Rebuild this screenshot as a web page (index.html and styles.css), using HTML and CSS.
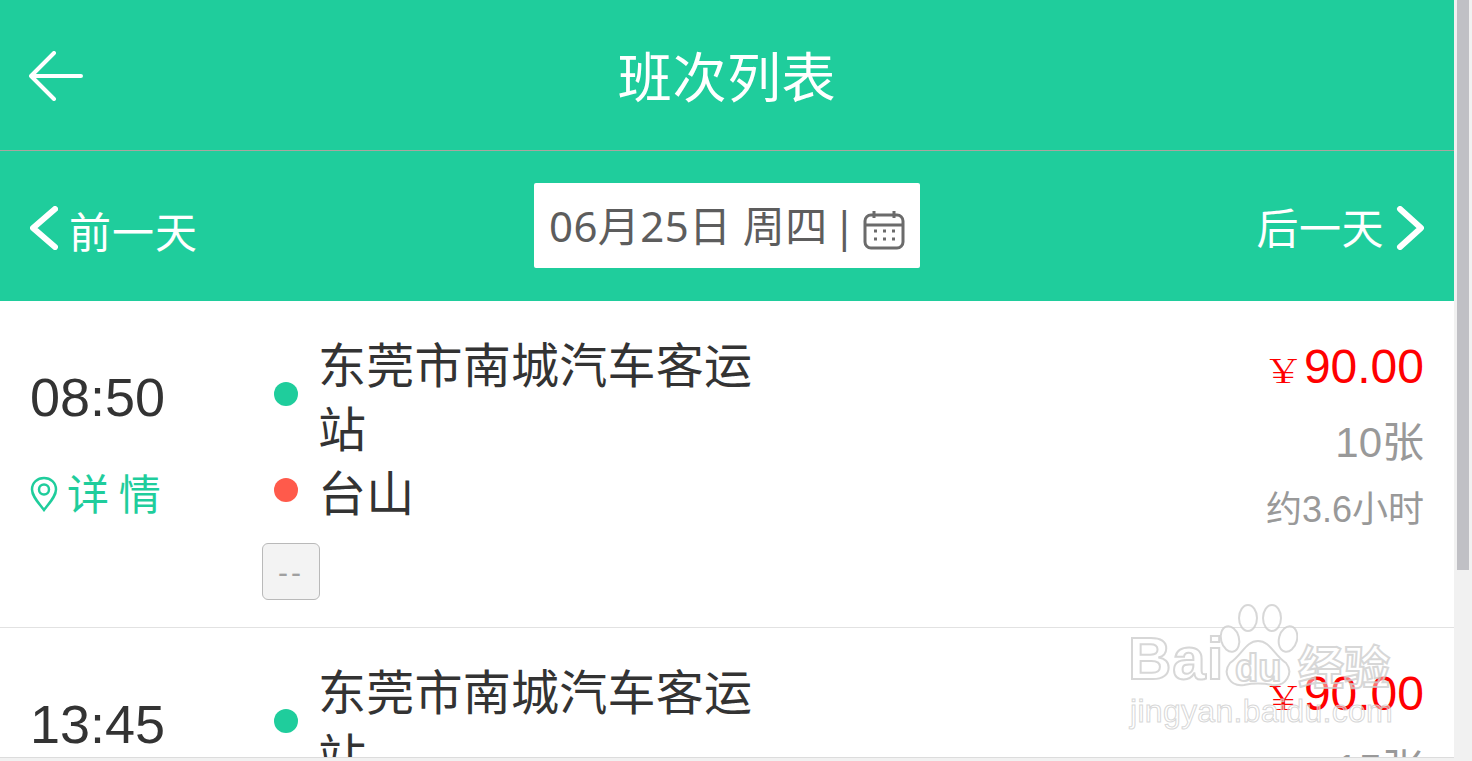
FILE: index.html
```html
<!DOCTYPE html>
<html lang="zh-CN">
  <head>
    <meta charset="UTF-8" />
    <title>班次列表</title>
    <link rel="stylesheet" href="styles.css">
  </head>
  <body>
    <div class="window">
      <div class="page">
        <header class="title-bar">
          <svg class="back-icon" viewBox="0 0 54 50" width="54" height="50">
            <path d="M25 2 L2 25 L25 48 M2 25 H52" />
          </svg>
          <h1>班次列表</h1>
        </header>

        <nav class="date-bar">
          <a class="day-link day-prev">
            <svg class="chevron" viewBox="0 0 28 44" width="28" height="44"><path d="M25 3 L3 22 L25 41" /></svg>
            <span>前一天</span>
          </a>
          <div class="date-box">
            <span class="date-text">06月25日 周四</span>
            <span class="date-sep">|</span>
            <svg class="calendar" viewBox="0 0 42 40" width="42" height="40">
              <rect x="2" y="5" width="38" height="33" rx="6" />
              <path d="M2 15 H40 M11 1 V8 M31 1 V8" />
              <path class="dots" d="M11 21 H14 M20 21 H23 M29 21 H32 M11 29 H14 M20 29 H23 M29 29 H32" />
            </svg>
          </div>
          <a class="day-link day-next">
            <span>后一天</span>
            <svg class="chevron" viewBox="0 0 28 44" width="28" height="44"><path d="M4 3 L25 22 L4 41" /></svg>
          </a>
        </nav>

        <section class="trip">
          <div class="trip-time">
            <div class="time">08:50</div>
            <a class="detail">
              <svg class="pin" viewBox="0 0 28 36" width="28" height="36">
                <path d="M14 34 C8 26 2 20 2 13.500 C2 6.500 7.500 2 14 2 C20.500 2 26 6.500 26 13.500 C26 20 20 26 14 34 Z" />
                <circle cx="14" cy="13.500" r="5" />
              </svg>
              <span>详 情</span>
            </a>
          </div>
          <div class="trip-route">
            <div class="stop"><i class="dot dot-from"></i><span>东莞市南城汽车客运站</span></div>
            <div class="stop"><i class="dot dot-to"></i><span>台山</span></div>
            <div class="tag">--</div>
          </div>
          <div class="trip-info">
            <div class="price"><small>￥</small>90.00</div>
            <div class="seats">10张</div>
            <div class="duration">约3.6小时</div>
          </div>
        </section>

        <section class="trip">
          <div class="trip-time">
            <div class="time">13:45</div>
          </div>
          <div class="trip-route">
            <div class="stop"><i class="dot dot-from"></i><span>东莞市南城汽车客运站</span></div>
          </div>
          <div class="trip-info">
            <div class="price"><small>￥</small>90.00</div>
            <div class="seats">15张</div>
          </div>
        </section>
      </div>

      <div class="scrollbar"><div class="thumb"></div></div>
      <div class="h-scrollbar"></div>

      <div class="watermark">
        <div class="wm-logo">
          <span>Bai</span>
          <svg class="paw" viewBox="0 0 80 86" width="80" height="86">
            <ellipse cx="12" cy="36" rx="9" ry="13" transform="rotate(-15 12 36)" />
            <ellipse cx="30" cy="15" rx="9" ry="13" />
            <ellipse cx="54" cy="15" rx="9" ry="13" />
            <ellipse cx="70" cy="36" rx="9" ry="13" transform="rotate(15 70 36)" />
            <path d="M40 38 C52 38 56 52 68 60 C76 70 68 84 54 82 C44 80 36 80 26 82 C12 84 4 70 12 60 C24 52 28 38 40 38 Z" />
          </svg>
          <span class="wm-du">du</span>
          <span class="wm-cn">经验</span>
        </div>
        <div class="wm-url">jingyan.baidu.com</div>
      </div>
    </div>
  </body>
</html>
```

FILE: styles.css
```css
:root {
  --green: #1fcd9c;
  --text-dark: #333333;
  --text-gray: #999999;
  --cjk: "Noto Sans CJK SC", sans-serif;
  --latin: "Liberation Sans", "Noto Sans CJK SC", sans-serif;
}

* {
  margin: 0;
  padding: 0;
  box-sizing: border-box;
}

html,
body {
  height: 100%;
  overflow: hidden;
}

body {
  background-color: white;
  color: var(--text-dark);
  font-family: var(--cjk);
}

.window {
  position: relative;
  display: flex;
  height: 761px;
  overflow: hidden;
}

.page {
  width: 1454px;
  flex-shrink: 0;
}

.title-bar {
  position: relative;
  height: 151px;
  background-color: var(--green);
  border-bottom: 1px solid #a9a5a0;
  display: flex;
  align-items: center;
  justify-content: center;
}

.title-bar h1 {
  font-size: 54px;
  font-weight: 400;
  color: white;
  line-height: 1;
  letter-spacing: 0.600px;
}

.back-icon {
  position: absolute;
  left: 29px;
  top: 51px;
}

.back-icon path {
  fill: none;
  stroke: white;
  stroke-width: 4;
  stroke-linecap: round;
  stroke-linejoin: round;
}

.date-bar {
  height: 150px;
  background-color: var(--green);
  padding: 32px 30px 0 30px;
  display: flex;
  justify-content: space-between;
  align-items: flex-start;
}

.day-link {
  display: flex;
  align-items: flex-start;
  color: white;
  font-size: 42px;
  line-height: 1;
  width: 240px;
}

.day-next {
  justify-content: flex-end;
}

.day-prev span {
  margin-top: 26px;
  margin-left: 11px;
  letter-spacing: 1px;
}

.day-next span {
  margin-top: 22px;
  margin-right: 12px;
  letter-spacing: 0.500px;
}

.chevron {
  margin-top: 23px;
}

.chevron path {
  fill: none;
  stroke: white;
  stroke-width: 6;
  stroke-linecap: round;
  stroke-linejoin: round;
}

.date-box {
  width: 386px;
  height: 85px;
  background-color: white;
  border-radius: 2px;
  color: #5d5d5d;
  font-family: "Noto Sans", "Noto Sans CJK SC", sans-serif;
  font-size: 42px;
  line-height: 1;
  padding: 0 15px 0 15px;
  display: flex;
  align-items: center;
  white-space: nowrap;
}

.date-text {
  letter-spacing: 0.400px;
}

.date-sep {
  margin-left: 5px;
}

.calendar {
  margin-left: auto;
  margin-top: 9px;
}

.calendar rect,
.calendar path {
  fill: none;
  stroke: #6b6b6b;
  stroke-width: 3;
}

.trip {
  display: flex;
  height: 327px;
  border-bottom: 1px solid #e2e2e2;
  padding: 29px 30px 0 30px;
}

.trip-time {
  width: 232px;
  flex-shrink: 0;
}

.time {
  font-family: var(--latin);
  font-size: 54px;
  line-height: 62px;
  margin-top: 36px;
}

.detail {
  display: flex;
  align-items: center;
  margin-top: 42px;
  color: var(--green);
  font-size: 42px;
  line-height: 52px;
  font-family: var(--latin);
}

.detail span {
  margin-left: 9px;
  word-spacing: -2px;
}

.pin {
  margin-top: -4px;
}

.pin path,
.pin circle {
  fill: none;
  stroke: var(--green);
  stroke-width: 2.500;
}

.trip-route {
  width: 490px;
  flex-shrink: 0;
  font-size: 48px;
  line-height: 64px;
  color: var(--text-dark);
}

.stop {
  display: flex;
  align-items: center;
}

.stop span {
  flex: 0 0 436px;
  margin-left: 32px;
  letter-spacing: 0.250px;
}

.dot {
  width: 24px;
  height: 24px;
  border-radius: 50%;
  margin-left: 12px;
  margin-right: -12px;
  flex-shrink: 0;
}

.dot-from {
  background-color: var(--green);
}

.dot-to {
  background-color: #ff5a4b;
}

.tag {
  width: 58px;
  height: 57px;
  margin-top: 21px;
  background-color: #f3f3f3;
  border: 1px solid #b9b9b9;
  border-radius: 6px;
  color: #a0a0a0;
  font-family: var(--latin);
  font-size: 30px;
  line-height: 57px;
  text-align: center;
  letter-spacing: 3px;
}

.trip-info {
  flex: 1;
  margin-top: 2px;
  text-align: right;
  font-family: var(--latin);
}

.price {
  color: #ff0000;
  font-size: 48px;
  line-height: 70px;
  height: 70px;
}

.price small {
  display: inline-block;
  font-family: "Liberation Serif", "Noto Serif CJK SC", "Noto Sans CJK SC", serif;
  font-size: 32px;
  line-height: 1;
  transform: scaleX(1.3);
  transform-origin: right center;
}

.seats {
  color: var(--text-gray);
  font-size: 42px;
  line-height: 50px;
  margin-top: 16px;
}

.duration {
  color: var(--text-gray);
  font-size: 36px;
  line-height: 44px;
  margin-top: 20px;
}

.scrollbar {
  width: 18px;
  flex-shrink: 0;
  background-color: #f1f1f1;
  padding: 0 3px;
}

.thumb {
  width: 12px;
  height: 570px;
  background-color: #c0c0c5;
}

.h-scrollbar {
  position: absolute;
  left: 0;
  right: 18px;
  bottom: 0;
  height: 4px;
  background-color: #f1f1f1;
  border-top: 1px solid #dcdcdc;
}

.watermark {
  position: absolute;
  left: 1128px;
  top: 603px;
  width: 270px;
  color: rgba(255, 255, 255, 0.45);
  pointer-events: none;
}

.wm-logo {
  display: flex;
  align-items: flex-end;
  height: 86px;
  font-family: var(--latin);
  font-size: 60px;
  font-weight: 700;
  line-height: 1;
  -webkit-text-stroke: 2px rgba(205, 205, 205, 0.8);
}

.wm-logo > span:first-child {
  letter-spacing: 1px;
}

.paw {
  position: absolute;
  left: 90px;
  top: 0;
}

.paw ellipse,
.paw path {
  fill: rgba(255, 255, 255, 0.5);
  stroke: rgba(205, 205, 205, 0.8);
  stroke-width: 2;
}

.wm-du {
  position: absolute;
  left: 107px;
  top: 46px;
  font-size: 38px;
}

.wm-cn {
  position: absolute;
  left: 170px;
  top: 38px;
  font-family: var(--cjk);
  font-size: 46px;
}

.wm-url {
  font-family: var(--latin);
  font-size: 32px;
  font-weight: 400;
  line-height: 36px;
  margin-top: 4px;
  margin-left: 2px;
  letter-spacing: 0.300px;
  -webkit-text-stroke: 1px rgba(205, 205, 205, 0.8);
}
```
